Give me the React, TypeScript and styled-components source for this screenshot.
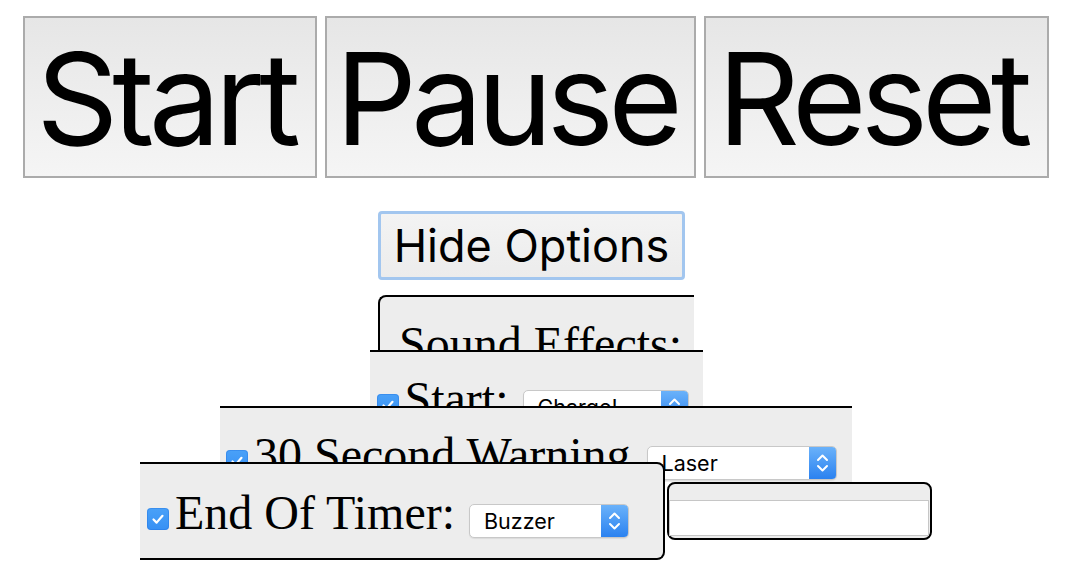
import React from "react";
import styled, { createGlobalStyle } from "styled-components";

const GlobalStyle = createGlobalStyle`
  html, body {
    margin: 0;
    padding: 0;
    background: #ffffff;
  }
  body {
    width: 1066px;
    height: 582px;
    overflow: hidden;
  }
`;

const Page = styled.div`
  box-sizing: border-box;
  width: 1066px;
  padding: 16px 0 0 6px;
  display: flex;
  flex-direction: column;
  align-items: center;
`;

const ButtonRow = styled.div`
  display: flex;
  gap: 8px;
`;

const BigButton = styled.button<{ $w: number }>`
  box-sizing: border-box;
  width: ${(p) => p.$w}px;
  height: 162px;
  padding: 3px 9px 0 0;
  border: 2px solid #ababab;
  border-radius: 0;
  background: linear-gradient(#e6e6e6, #f5f5f5);
  color: #000;
  font-family: Inter, "Liberation Sans", sans-serif;
  font-size: 128px;
  letter-spacing: -6px;
  line-height: 1;
  display: flex;
  align-items: center;
  justify-content: center;
  white-space: nowrap;
  overflow: visible;
`;

const HideButton = styled.button`
  box-sizing: border-box;
  width: 307px;
  height: 69px;
  margin: 33px 9px 0 0;
  padding: 0;
  border: 3px solid #a2c6ef;
  border-radius: 4px;
  background: linear-gradient(#f3f3f3, #ececec);
  color: #000;
  font-family: Inter, "Liberation Sans", sans-serif;
  font-size: 45px;
  line-height: 1;
  display: flex;
  align-items: center;
  justify-content: center;
  white-space: nowrap;
`;

const Stack = styled.div`
  margin-top: 15px;
  display: flex;
  flex-direction: column;
  align-items: center;
`;

const PanelBase = styled.div<{ $w: number; $h: number; $pl: number }>`
  position: relative;
  box-sizing: border-box;
  width: ${(p) => p.$w}px;
  height: ${(p) => p.$h}px;
  padding: 19px 0 0 ${(p) => p.$pl}px;
  background: #ededed;
  color: #000;
  font-family: "Liberation Serif", "Times New Roman", serif;
  font-size: 48px;
  line-height: normal;
  white-space: nowrap;
`;

const SoundPanel = styled(PanelBase)`
  border-top: 2px solid #000;
  border-left: 2px solid #000;
  border-top-left-radius: 8px;
`;

const RowPanel = styled(PanelBase)`
  margin-top: -20px;
  border-top: 2px solid #000;
`;

const EndRow = styled.div`
  position: relative;
  margin-top: -20px;
  display: flex;
  align-items: center;
  gap: 2px;
`;

const EndPanel = styled(PanelBase)`
  padding-top: 21px;
  border: 2px solid #000;
  border-left: none;
  border-radius: 0 8px 8px 0;
`;

const InputBox = styled.div`
  position: relative;
  box-sizing: border-box;
  width: 265px;
  height: 58px;
  padding: 16px 1px 0 0;
  border: 2px solid #000;
  border-radius: 8px;
  background: #ededed;
`;

const TextField = styled.input`
  box-sizing: border-box;
  display: block;
  width: 260px;
  height: 36px;
  margin: 0;
  padding: 0 4px;
  border: 1px solid #c6c6c6;
  background: #fff;
  outline: none;
  font-family: Inter, "Liberation Sans", sans-serif;
  font-size: 16px;
`;

const Label = styled.span``;

const CheckBox = styled.span`
  display: inline-flex;
  align-items: center;
  justify-content: center;
  width: 22px;
  height: 22px;
  margin-right: 6px;
  vertical-align: -1px;
  border-radius: 4px;
  background: linear-gradient(#4aa1f8, #3690f4);
  box-shadow: inset 0 0 0 1px rgba(30, 110, 220, 0.35);
`;

const Select = styled.span<{ $w: number; $ml: number }>`
  display: inline-flex;
  box-sizing: border-box;
  width: ${(p) => p.$w}px;
  height: 34px;
  margin-left: ${(p) => p.$ml}px;
  vertical-align: baseline;
  border: 1px solid #c8c8c8;
  border-radius: 5px;
  background: #fff;
  box-shadow: 0 1px 1px rgba(0, 0, 0, 0.08);
  overflow: hidden;
  font-family: Inter, "Liberation Sans", sans-serif;
  font-size: 21.5px;
  line-height: normal;
`;

const SelectText = styled.span`
  flex: 1;
  align-self: center;
  padding-left: 14px;
  color: #000;
`;

const SelectArrow = styled.span`
  width: 27px;
  align-self: stretch;
  display: flex;
  align-items: center;
  justify-content: center;
  background: linear-gradient(#6ab2fa, #2b82f0);
`;

function Check() {
  return (
    <CheckBox role="checkbox" aria-checked="true">
      <svg width="22" height="22" viewBox="0 0 22 22">
        <path
          d="M6.5 11.5 L9.6 14.6 L15.5 7.8"
          fill="none"
          stroke="#fff"
          strokeWidth="2.2"
          strokeLinecap="round"
          strokeLinejoin="round"
        />
      </svg>
    </CheckBox>
  );
}

function Dropdown({
  value,
  width,
  ml = 14,
}: {
  value: string;
  width: number;
  ml?: number;
}) {
  return (
    <Select $w={width} $ml={ml} role="combobox">
      <SelectText>{value}</SelectText>
      <SelectArrow>
        <svg width="27" height="32" viewBox="0 0 27 32">
          <path
            d="M9 13 L13.5 8.5 L18 13 M9 19 L13.5 23.5 L18 19"
            fill="none"
            stroke="#fff"
            strokeWidth="2"
            strokeLinecap="round"
            strokeLinejoin="round"
          />
        </svg>
      </SelectArrow>
    </Select>
  );
}

export default function App() {
  return (
    <>
      <GlobalStyle />
      <Page>
        <ButtonRow>
          <BigButton $w={294}>Start</BigButton>
          <BigButton $w={371}>Pause</BigButton>
          <BigButton $w={345}>Reset</BigButton>
        </ButtonRow>
        <HideButton>Hide Options</HideButton>
        <Stack>
          <SoundPanel $w={316} $h={75} $pl={19}>
            Sound Effects:
          </SoundPanel>
          <RowPanel $w={333} $h={76} $pl={7}>
            <Check />
            <Label>Start:</Label>
            <Dropdown value="Charge!" width={166} />
          </RowPanel>
          <RowPanel $w={632} $h={76} $pl={6}>
            <Check />
            <Label>30 Second Warning</Label>
            <Dropdown value="Laser" width={190} ml={16} />
          </RowPanel>
          <EndRow>
            <EndPanel $w={525} $h={98} $pl={7}>
              <Check />
              <Label>End Of Timer:</Label>
              <Dropdown value="Buzzer" width={160} />
            </EndPanel>
            <InputBox>
              <TextField type="text" />
            </InputBox>
          </EndRow>
        </Stack>
      </Page>
    </>
  );
}
